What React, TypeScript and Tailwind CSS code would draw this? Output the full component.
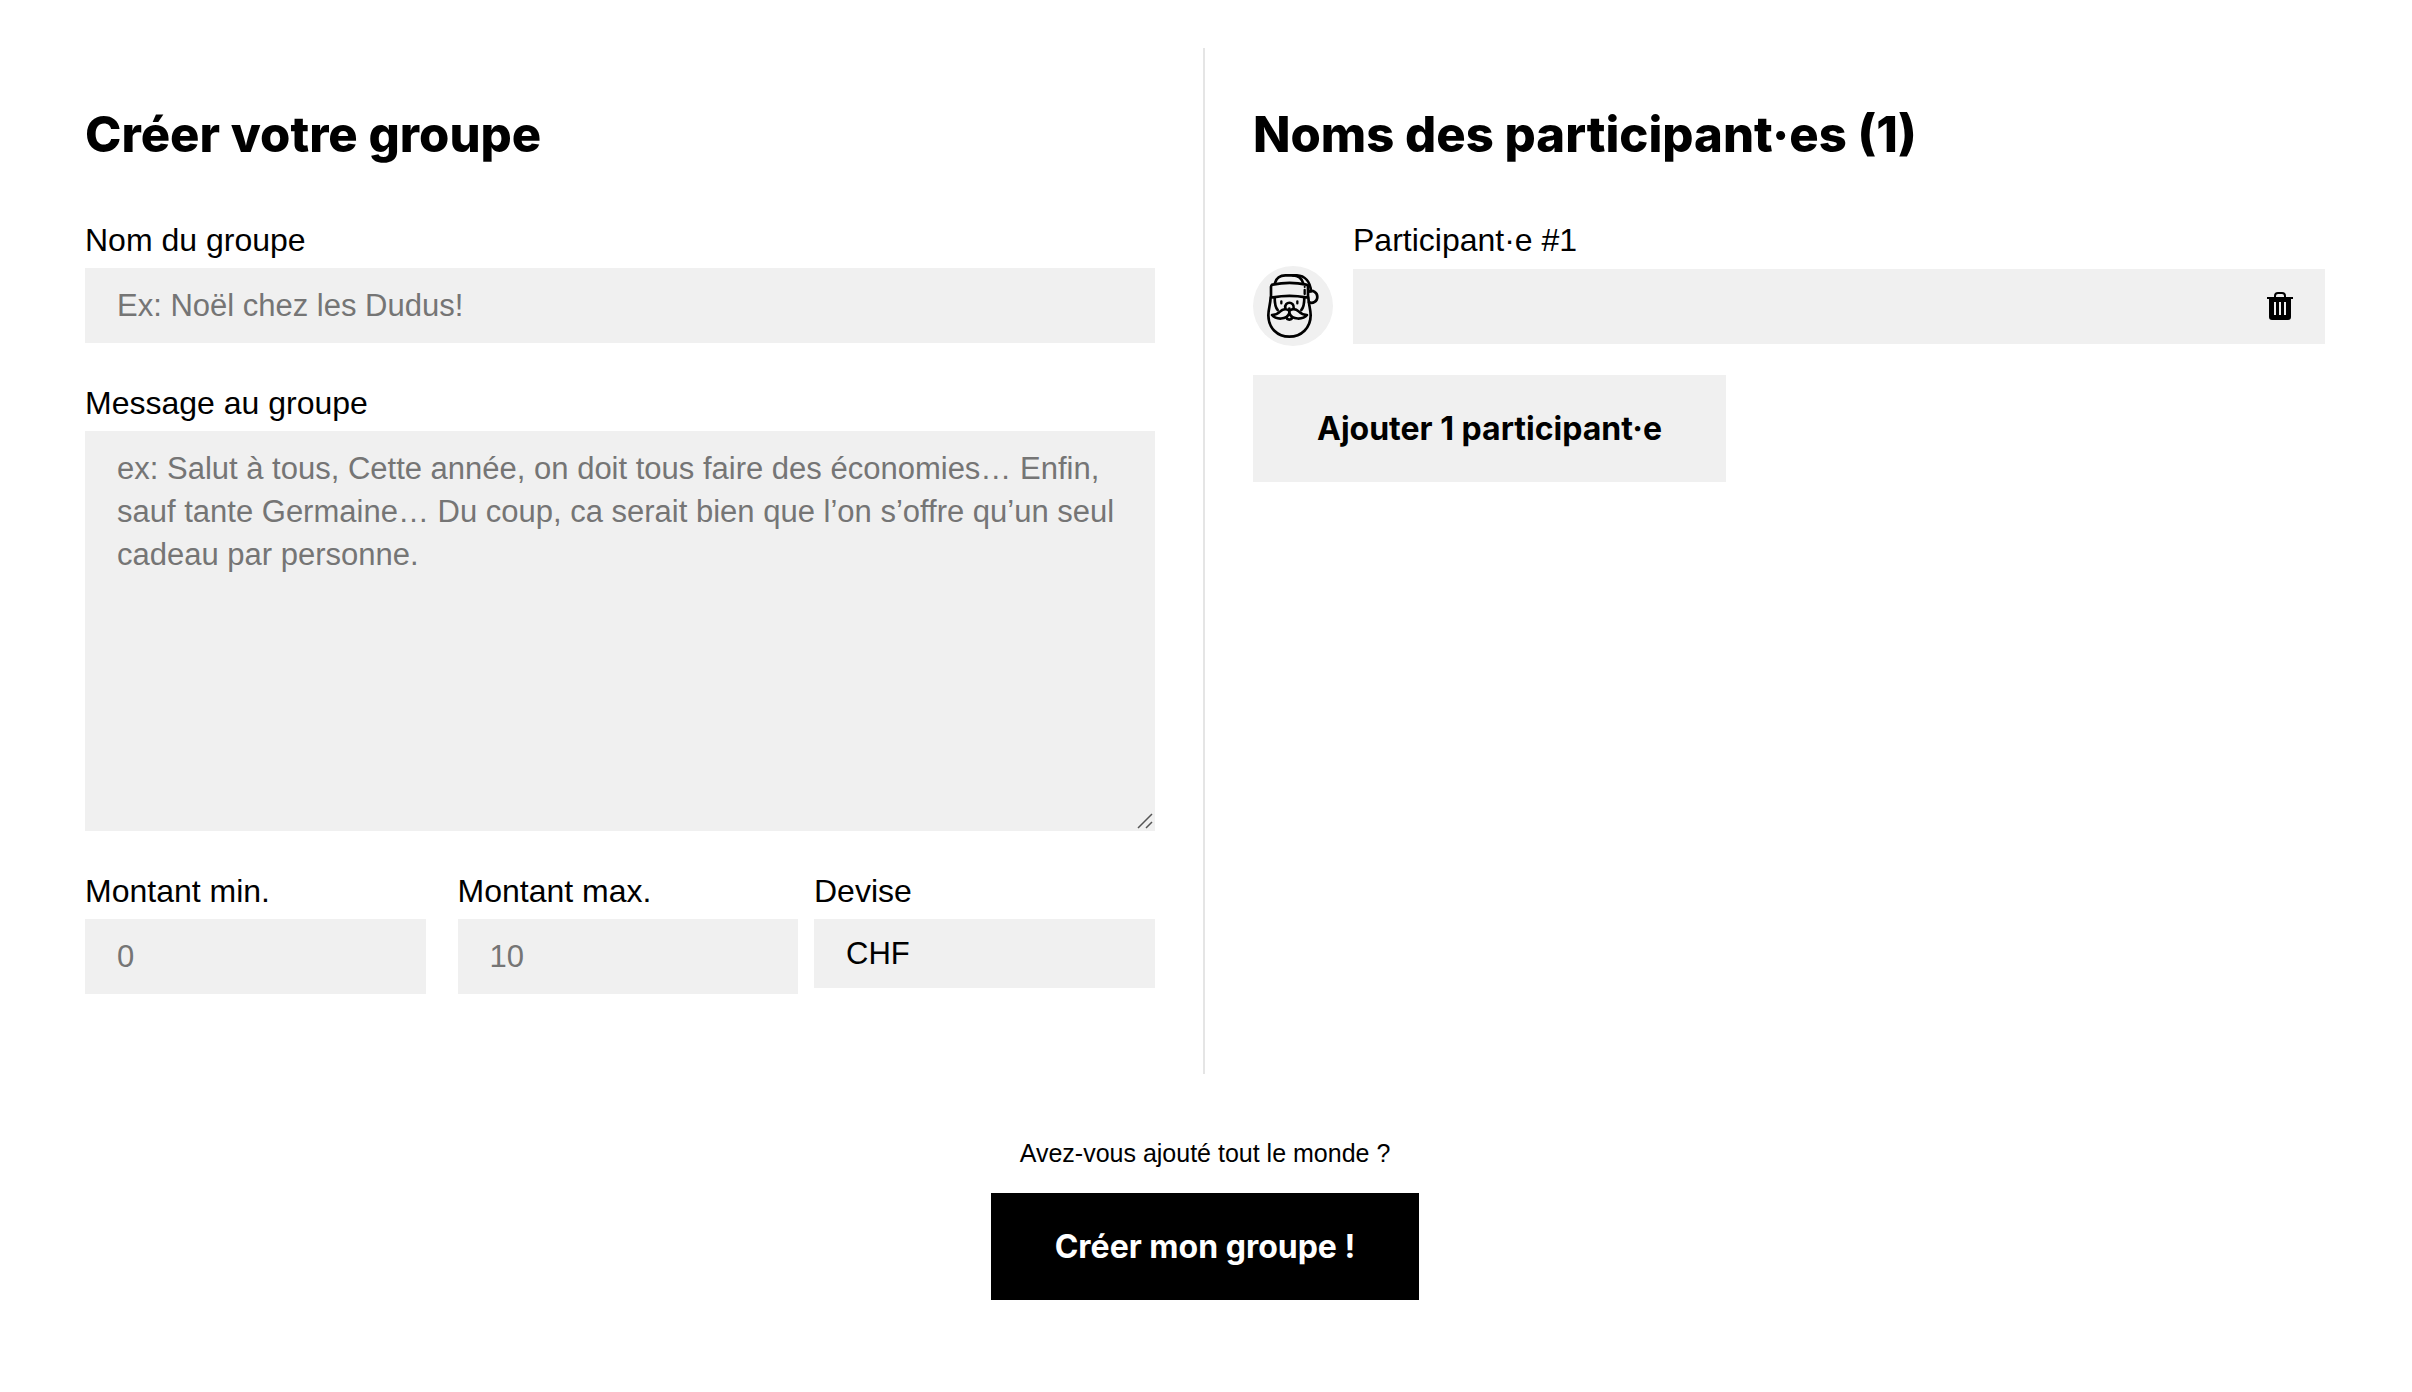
import { useState } from "react";

const fieldClass = "w-full bg-[#f0f0f0] px-8 py-4 text-[31px] leading-[43px] placeholder:text-[#757575] outline-none rounded-none";
const titleClass = "mb-[46px] font-['Inter',sans-serif] text-[49px] leading-[77px] font-extrabold";
const buttonClass = "px-16 py-8 font-['Inter',sans-serif] font-bold";

function SantaIcon() {
  return (
    <svg viewBox="39 48 240 240" className="h-20 w-20 rounded-full bg-[#f0f0f0]" fill="none" stroke="#000" strokeWidth="8" strokeLinecap="round" strokeLinejoin="round" aria-hidden="true">
      {/* hat */}
      <path d="M105 99 C108 84 121 76 136 76 H158 C174 76 186 86 190 101" />
      <path d="M158 76 H170 C195 77 211 95 213 124" />
      <path d="M98 104 C130 97 168 97 199 104 Q204 105 204 110 V137 Q204 144 198 142 C165 136 132 136 99 142 Q93 143 93 137 V110 Q93 105 98 104 Z" />
      <path d="M194 120 V132" strokeWidth="7" />
      <path d="M194 110 V111" strokeWidth="6" />
      <path d="M206 125 C219 119 232 127 232 141 C232 154 219 162 207 157" />
      {/* beard */}
      <path d="M92 142 C91 165 85 177 85 196 C85 234 112 260 148 260 C184 260 212 234 212 196 C212 177 206 165 205 142" />
      <path d="M104 142 C104 160 105 172 113 180" />
      <path d="M193 142 C193 160 192 172 184 180" />
      {/* eyes and nose */}
      <path d="M124 154 V160 M172 154 V160" strokeWidth="7" />
      <path d="M136 174 C132 153 164 153 161 174" />
      {/* moustache */}
      <path d="M148 182 C139 175 128 177 121 184 C114 191 107 195 96 195 C107 209 140 211 148 190 C156 211 190 209 201 195 C190 195 183 191 176 184 C169 177 158 175 148 182 Z" />
      <path d="M148 176 V190 M140 202 C140 211 156 211 156 202" />
    </svg>
  );
}

function TrashIcon() {
  return (
    <svg viewBox="0 0 26 28" className="h-7 w-[26px]" aria-hidden="true">
      <path d="M8 6 V4 Q8 1 11 1 H15 Q18 1 18 4 V6" fill="none" stroke="#000" strokeWidth="2" />
      <path d="M0 5 H26 V7 H24 V25 Q24 28 21 28 H5 Q2 28 2 25 V7 H0 Z" />
      <path d="M8 10 V23 M13 10 V23 M18 10 V23" stroke="#f0f0f0" strokeWidth="2" />
    </svg>
  );
}

export default function App() {
  const [participants, setParticipants] = useState([{ id: 1, name: "" }]);
  const [group, setGroup] = useState({ name: "", message: "", min: "", max: "", currency: "CHF" });

  const addParticipant = () => {
    setParticipants([...participants, { id: Date.now(), name: "" }]);
  };

  const removeParticipant = (id: number) => {
    setParticipants(participants.filter((p) => p.id !== id));
  };

  const renameParticipant = (id: number, name: string) => {
    setParticipants(participants.map((p) => (p.id === id ? { ...p, name } : p)));
  };

  return (
    <form
      onSubmit={(e) => e.preventDefault()}
      className="min-h-screen bg-white pt-12 pr-[39px] pb-12 pl-[37px] font-['Liberation_Sans',Arial,sans-serif] text-[32px] leading-[43px] text-black"
    >
      <div className="grid grid-cols-2">
        {/* Groupe */}
        <section className="border-r-2 border-[#e5e5e5] px-12 pt-12 pb-20">
          <h2 className={titleClass}>Créer votre groupe</h2>

          <div className="flex flex-col gap-[39px]">
            <div>
              <label htmlFor="name" className="mb-1.5 block">Nom du groupe</label>
              <input id="name" type="text" placeholder="Ex: Noël chez les Dudus!" className={`${fieldClass} block`}
                value={group.name} onChange={(e) => setGroup({ ...group, name: e.target.value })} />
            </div>

            <div>
              <label htmlFor="message" className="mb-1.5 block">Message au groupe</label>
              <div className="relative">
                <textarea id="message" className={`${fieldClass} block h-[400px] resize-none`}
                  placeholder="ex: Salut à tous, Cette année, on doit tous faire des économies… Enfin, sauf tante Germaine… Du coup, ca serait bien que l’on s’offre qu’un seul cadeau par personne."
                  value={group.message} onChange={(e) => setGroup({ ...group, message: e.target.value })} />
                <svg viewBox="0 0 16 16" className="pointer-events-none absolute right-0.5 bottom-0.5 h-4 w-4" stroke="#555" strokeWidth="1.5" aria-hidden="true">
                  <path d="M1 15 L15 1 M9 15 L15 9" />
                </svg>
              </div>
            </div>

            <div className="flex items-start gap-4">
              <div className="grid flex-[713] grid-cols-2 gap-8">
                <div>
                  <label htmlFor="min" className="mb-1.5 block">Montant min.</label>
                  <input id="min" type="text" inputMode="numeric" placeholder="0" className={`${fieldClass} block`}
                    value={group.min} onChange={(e) => setGroup({ ...group, min: e.target.value })} />
                </div>
                <div>
                  <label htmlFor="max" className="mb-1.5 block">Montant max.</label>
                  <input id="max" type="text" inputMode="numeric" placeholder="10" className={`${fieldClass} block`}
                    value={group.max} onChange={(e) => setGroup({ ...group, max: e.target.value })} />
                </div>
              </div>
              <div className="flex-[341]">
                <label htmlFor="currency" className="mb-1.5 block">Devise</label>
                <select id="currency" className="block h-[69px] w-full appearance-none bg-[#f0f0f0] px-8 text-[31px] outline-none"
                  value={group.currency} onChange={(e) => setGroup({ ...group, currency: e.target.value })}>
                  <option>CHF</option>
                  <option>EUR</option>
                  <option>USD</option>
                </select>
              </div>
            </div>
          </div>
        </section>

        {/* Participants */}
        <section className="px-12 pt-12 pb-20">
          <h2 className={titleClass}>Noms des participant·es ({participants.length})</h2>

          {participants.map((p, i) => (
            <div key={p.id} className="mb-[29px] grid grid-cols-[80px_1fr] items-center gap-x-5 gap-y-1">
              <label htmlFor={`participant-${p.id}`} className="col-start-2">Participant·e #{i + 1}</label>
              <SantaIcon />
              <div className="flex items-center bg-[#f0f0f0] pr-8">
                <input id={`participant-${p.id}`} type="text" className={`${fieldClass} min-w-0 flex-1`}
                  value={p.name} onChange={(e) => renameParticipant(p.id, e.target.value)} />
                <button type="button" aria-label="Supprimer" onClick={() => removeParticipant(p.id)}>
                  <TrashIcon />
                </button>
              </div>
            </div>
          ))}

          <button type="button" onClick={addParticipant} className={`${buttonClass} bg-[#f0f0f0]`}>
            Ajouter 1 participant·e
          </button>
        </section>
      </div>

      {/* Validation */}
      <div className="mt-15 flex flex-col items-center">
        <p className="mb-5 text-[25px] leading-[39px]">Avez-vous ajouté tout le monde ?</p>
        <button type="submit" className={`${buttonClass} bg-black text-white`}>Créer mon groupe !</button>
      </div>
    </form>
  );
}
